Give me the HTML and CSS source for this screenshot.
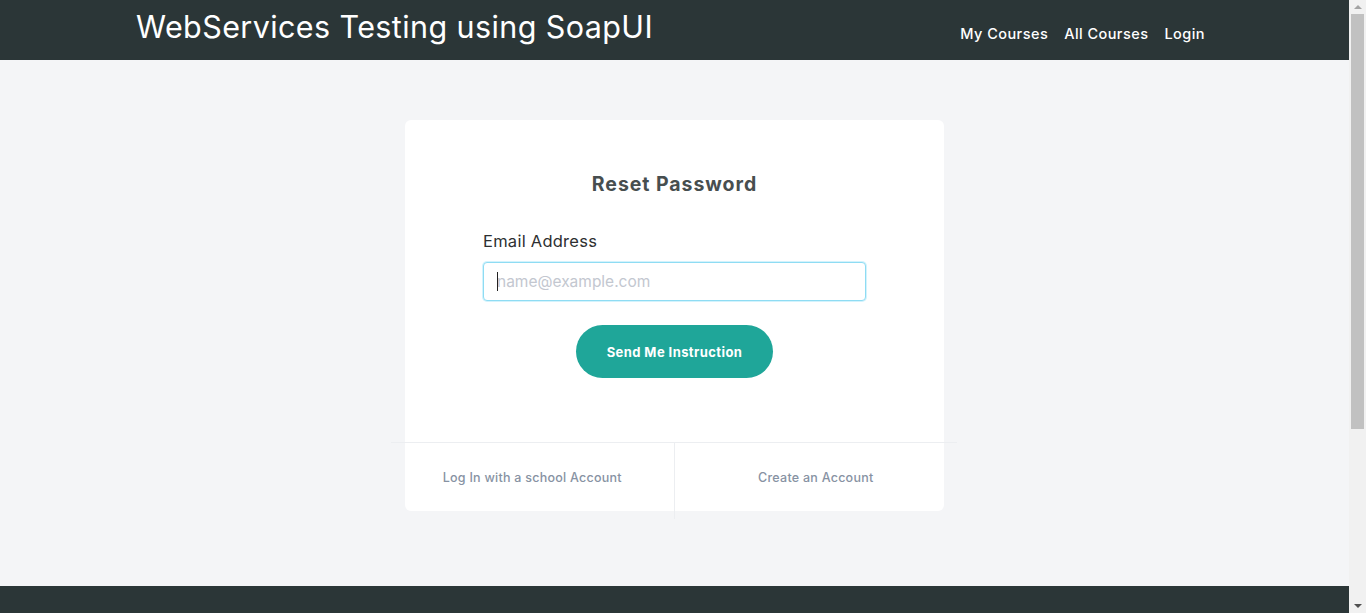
FILE: index.html
```html
<!DOCTYPE html>
<html lang="en">
<head>
<meta charset="utf-8">
<title>Reset Password</title>
<link rel="stylesheet" href="styles.css">
</head>
<body>
<div class="page">
  <div class="main">
    <header class="topbar">
      <div class="topbar-inner">
        <a class="brand" href="#">WebServices Testing using SoapUI</a>
        <nav class="nav">
          <a href="#">My Courses</a>
          <a href="#">All Courses</a>
          <a href="#">Login</a>
        </nav>
      </div>
    </header>
    <main class="content">
      <section class="card">
        <div class="card-body">
          <h2 class="card-title">Reset Password</h2>
          <label class="field-label" for="email">Email Address</label>
          <div class="input-wrap">
            <input class="field-input" id="email" type="email" placeholder="name@example.com">
            <span class="caret"></span>
          </div>
          <div class="actions">
            <button class="btn-primary" type="button">Send Me Instruction</button>
          </div>
        </div>
        <div class="card-links">
          <a class="link-col link-left" href="#">Log In with a school Account</a>
          <a class="link-col" href="#">Create an Account</a>
        </div>
      </section>
    </main>
    <footer class="footer"></footer>
  </div>
  <div class="scrollbar">
    <div class="sb-arrow sb-up"></div>
    <div class="sb-track"><div class="sb-thumb"></div></div>
    <div class="sb-arrow sb-down"></div>
  </div>
</div>
</body>
</html>
```

FILE: styles.css
```css
html, body {
  margin: 0;
  padding: 0;
  height: 100%;
  overflow: hidden;
}
body {
  font-family: "Inter", "Open Sans", sans-serif;
  color: #333;
}
a { text-decoration: none; }

.page {
  display: flex;
  height: 613px;
}
.main {
  flex: 1;
  display: flex;
  flex-direction: column;
  background: #f4f5f7;
}

.topbar {
  height: 60px;
  background: #2b3637;
  flex-shrink: 0;
}
.topbar-inner {
  width: 1077px;
  margin: 0 auto;
  display: flex;
  justify-content: space-between;
  align-items: flex-start;
}
.brand {
  color: #fff;
  font-size: 30.5px;
  font-weight: 400;
  line-height: 36px;
  padding-top: 9px;
  letter-spacing: 0.4px;
}
.nav {
  display: flex;
  padding-top: 24px;
}
.nav a {
  color: #fff;
  font-size: 14.5px;
  font-weight: 500;
  line-height: 20px;
  padding: 0 8px;
  letter-spacing: 0.45px;
}

.content {
  flex: 1;
  padding-top: 60px;
  display: flex;
  justify-content: center;
  align-items: flex-start;
}
.card {
  width: 539px;
  background: #fff;
  border-radius: 6px;
}
.card-body {
  padding: 52px 78px 0;
  display: flex;
  flex-direction: column;
}
.card-title {
  margin: 0;
  text-align: center;
  font-size: 19.5px;
  line-height: 24px;
  font-weight: 700;
  color: #474e4f;
  letter-spacing: 0.95px;
}
.field-label {
  margin-top: 33px;
  font-size: 16.5px;
  line-height: 24px;
  color: #2d2f31;
  letter-spacing: 0.25px;
}
.input-wrap {
  position: relative;
  margin-top: 9px;
}
.field-input {
  box-sizing: border-box;
  display: block;
  width: 383px;
  height: 39px;
  padding: 0 13px;
  border: 1px solid #8fdcf3;
  border-radius: 4px;
  box-shadow: 0 0 0 1px rgba(128, 220, 248, 0.35);
  font-family: inherit;
  font-size: 15.5px;
  color: #333;
  outline: none;
  background: #fff;
}
.field-input::placeholder {
  color: #c3c7d0;
}
.caret {
  position: absolute;
  left: 14px;
  top: 10px;
  width: 1px;
  height: 19px;
  background: #222;
}
.actions {
  margin-top: 24px;
  display: flex;
  justify-content: center;
}
.btn-primary {
  width: 197px;
  height: 53px;
  border: none;
  border-radius: 27px;
  background: #1fa699;
  color: #fff;
  font-family: inherit;
  font-size: 13px;
  font-weight: 700;
  letter-spacing: 0.42px;
  cursor: pointer;
}

.card-links {
  margin: 64px -13px 0 -14px;
  border-top: 1px solid #eceef1;
  display: flex;
  align-items: flex-start;
}
.link-col {
  flex: 1;
  height: 68px;
  line-height: 70px;
  text-align: center;
  font-size: 12.5px;
  font-weight: 500;
  color: #8792a3;
  letter-spacing: 0.25px;
}
.link-left {
  border-right: 1px solid #eceef1;
  height: 76px;
  margin-bottom: -8px;
  box-sizing: border-box;
}

.footer {
  height: 27px;
  background: #2b3637;
  flex-shrink: 0;
}

.scrollbar {
  width: 17px;
  background: #f1f1f1;
  display: flex;
  flex-direction: column;
}
.sb-arrow {
  height: 14px;
  flex-shrink: 0;
  display: flex;
  justify-content: center;
  align-items: center;
}
.sb-up::before {
  content: "";
  border-left: 4px solid transparent;
  border-right: 4px solid transparent;
  border-bottom: 4px solid #a3a3a3;
}
.sb-down::before {
  content: "";
  border-left: 4px solid transparent;
  border-right: 4px solid transparent;
  border-top: 4px solid #505050;
}
.sb-track {
  flex: 1;
  padding: 0 2px;
}
.sb-thumb {
  height: 415px;
  background: #c1c1c1;
}
```
